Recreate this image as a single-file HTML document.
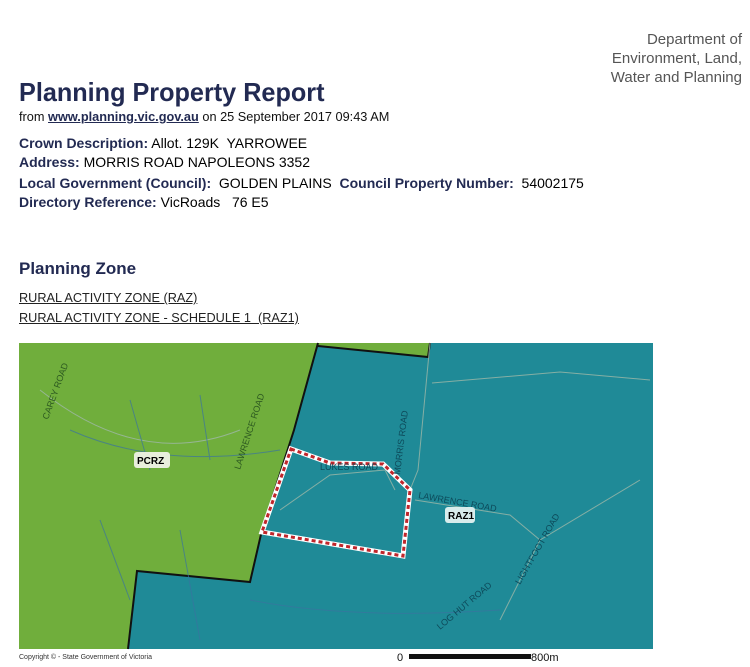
<!DOCTYPE html>
<html><head><meta charset="utf-8"><style>
body{margin:0;width:750px;height:667px;background:#fff;position:relative;overflow:hidden;font-family:"Liberation Sans",sans-serif;}
.a{position:absolute;white-space:nowrap;}
.n{color:#222a52;font-weight:bold;}
.t{color:#111;}
.f{font-size:14px;}
</style></head><body>
<div class="a" style="right:8px;top:30px;text-align:right;font-size:15px;line-height:19px;color:#555;">Department of<br>Environment, Land,<br>Water and Planning</div>
<div class="a n" style="left:19px;top:77px;font-size:26px;transform:scaleX(.97);transform-origin:left;">Planning Property Report</div>
<div class="a t" style="left:19px;top:109px;font-size:13px;transform:scaleX(.98);transform-origin:left;">from <b style="text-decoration:underline;color:#222a52">www.planning.vic.gov.au</b> on 25 September 2017 09:43 AM</div>
<div class="a f" style="left:19px;top:135px;"><span class="n">Crown Description:</span> Allot. 129K&nbsp; YARROWEE</div>
<div class="a f" style="left:19px;top:154px;"><span class="n">Address:</span> MORRIS ROAD NAPOLEONS 3352</div>
<div class="a f" style="left:19px;top:175px;"><span class="n">Local Government (Council):</span>&nbsp; GOLDEN PLAINS&nbsp; <span class="n">Council Property Number:</span>&nbsp; 54002175</div>
<div class="a f" style="left:19px;top:194px;"><span class="n">Directory Reference:</span> VicRoads&nbsp;&nbsp; 76 E5</div>
<div class="a n" style="left:19px;top:259px;font-size:17px;">Planning Zone</div>
<div class="a" style="left:19px;top:291px;font-size:12.7px;color:#222;text-decoration:underline;">RURAL ACTIVITY ZONE (RAZ)</div>
<div class="a" style="left:19px;top:311px;font-size:12.7px;color:#222;text-decoration:underline;">RURAL ACTIVITY ZONE - SCHEDULE 1&nbsp; (RAZ1)</div>
<svg class="a" style="left:0;top:0" width="750" height="667">
<rect x="19" y="343" width="634" height="306" fill="#1f8a97"/>
<polygon points="19,343 318,343 294,430 262,530 250,582 137,571 128,649 19,649" fill="#70ae3c"/>
<polygon points="318,343 430,343 428,357 318,346" fill="#70ae3c"/>
<polyline points="318,346 428,357 430,343" fill="none" stroke="#111" stroke-width="2"/>
<polyline points="318,343 294,430 262,530 250,582 137,571 128,649" fill="none" stroke="#111" stroke-width="2"/>
<g fill="none" stroke="#9fb8a8" stroke-width="1" opacity=".8">
<path d="M430,343 L418,470 L410,490"/><path d="M432,383 L560,372 L650,380"/>
<path d="M415,500 L510,515 L540,540 L640,480"/><path d="M280,510 L330,475 L385,470 L395,490"/>
<path d="M540,540 L500,620"/><path d="M40,390 Q140,470 240,430"/>
</g>
<g fill="none" stroke="#3a73a0" stroke-width="1" opacity=".7">
<path d="M70,430 Q160,470 280,450"/><path d="M130,400 L150,470"/><path d="M200,395 L210,460"/><path d="M100,520 L130,600"/><path d="M180,530 L200,640"/><path d="M250,600 Q350,620 500,610"/>
</g>
<polygon points="291,449 330,463 383,464 410,490 403,556 262,532" fill="none" stroke="#fff" stroke-width="5"/>
<polygon points="291,449 330,463 383,464 410,490 403,556 262,532" fill="none" stroke="#c0262b" stroke-width="3" stroke-dasharray="4 3"/>
<g font-size="9" fill="#0d4a5a" font-family="Liberation Sans">
<text transform="translate(400,475) rotate(-83)">MORRIS ROAD</text>
<text transform="translate(418,498) rotate(10)">LAWRENCE ROAD</text>
<text transform="translate(240,470) rotate(-72)" fill="#2d5a20">LAWRENCE ROAD</text>
<text transform="translate(48,420) rotate(-70)" fill="#2d5a20">CAREY ROAD</text>
<text transform="translate(440,630) rotate(-40)">LOG HUT ROAD</text>
<text transform="translate(520,585) rotate(-60)">LIGHTFOOT ROAD</text>
<text x="320" y="470">LUKES ROAD</text>
</g>
<rect x="134" y="452" width="36" height="16" fill="#e8eedc" rx="3"/>
<text x="137" y="464" font-size="10" font-weight="bold" font-family="Liberation Sans">PCRZ</text>
<rect x="445" y="507" width="30" height="16" fill="#d8ecec" rx="3"/>
<text x="448" y="519" font-size="10" font-weight="bold" font-family="Liberation Sans">RAZ1</text>
<text x="19" y="659" font-size="7" fill="#333" font-family="Liberation Sans">Copyright © - State Government of Victoria</text>
<text x="397" y="661" font-size="11" fill="#111" font-family="Liberation Sans">0</text>
<rect x="409" y="654" width="122" height="5" fill="#111"/>
<text x="531" y="661" font-size="11" fill="#111" font-family="Liberation Sans">800m</text>
</svg>
</body></html>
